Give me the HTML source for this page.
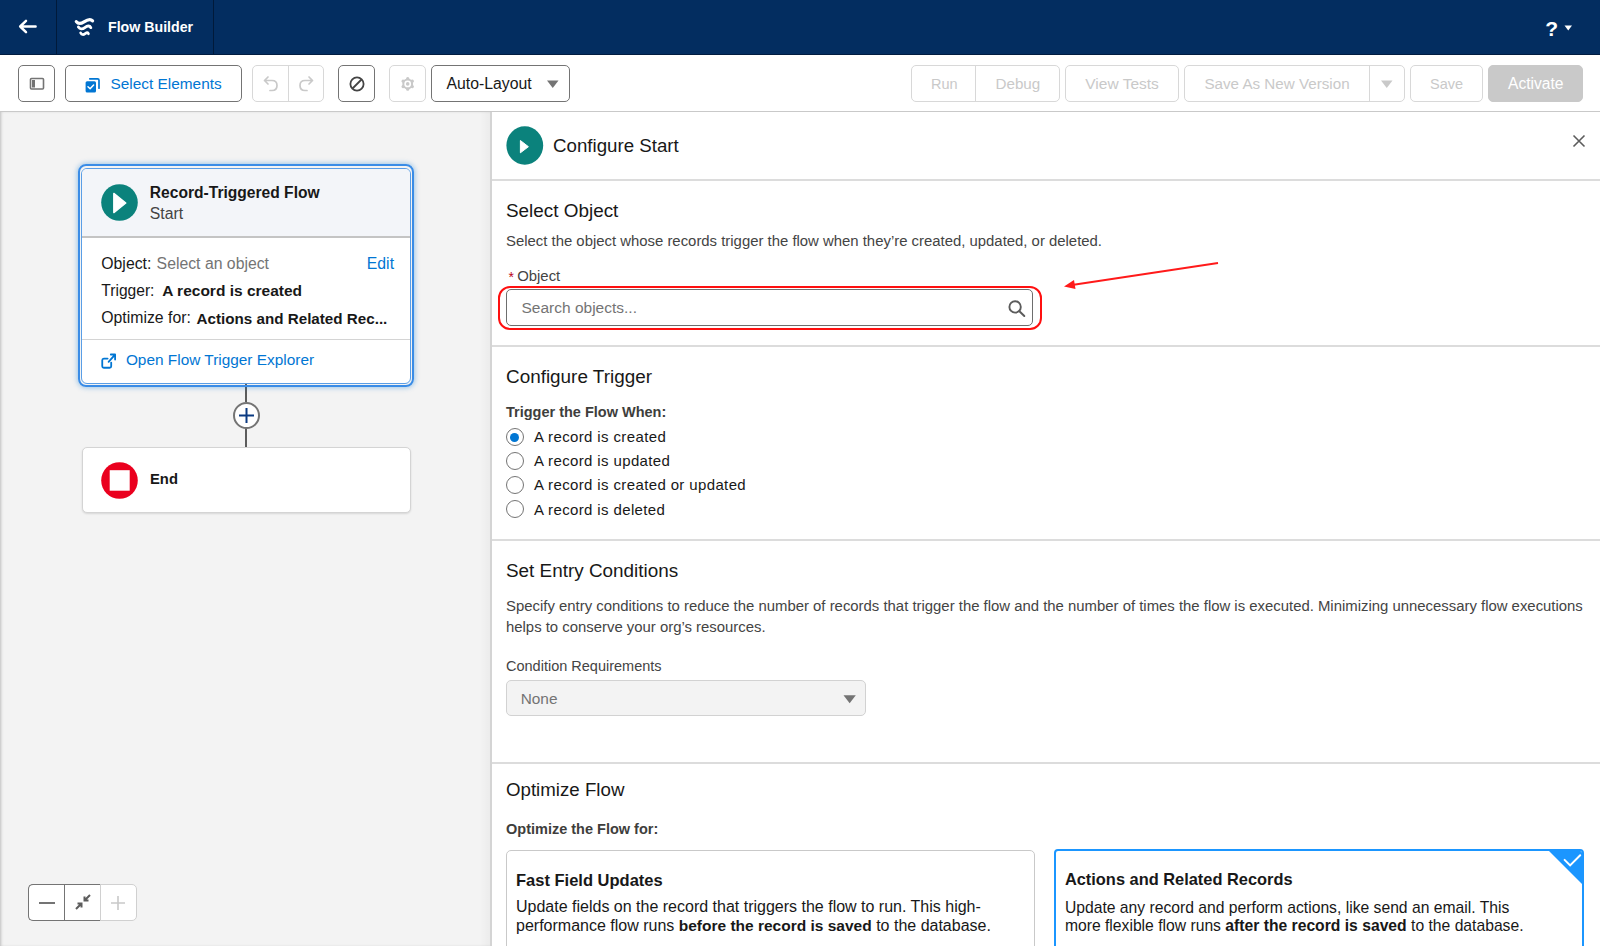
<!DOCTYPE html>
<html><head><meta charset="utf-8">
<style>
*{box-sizing:border-box;margin:0;padding:0}
html,body{width:1600px;height:946px;overflow:hidden;background:#fff;font-family:"Liberation Sans",sans-serif;color:#181818}
.a{position:absolute}
.t{position:absolute;white-space:nowrap;line-height:1;left:calc(var(--x)*1px);top:calc(var(--b)*1px - var(--fs)*0.8465px);font-size:calc(var(--fs)*1px)}
.b{font-weight:bold}
#hdr{left:0;top:0;width:1600px;height:55px;background:#032d60;border-bottom:1px solid #011c40}
.vsep{position:absolute;top:0;width:1px;height:54px;background:#011a3a}
#tb{left:0;top:55px;width:1600px;height:57px;background:#fff;border-bottom:1px solid #c9c9c9}
.btn{position:absolute;top:65px;height:37px;border:1px solid #747474;border-radius:5px;background:#fff}
.dis{border-color:#d8d8d8}
#canvas{left:0;top:112px;width:490px;height:834px;background:#f3f3f3;box-shadow:inset 2px 0 3px -1px rgba(0,0,0,0.22)}
#panel{left:490px;top:112px;width:1110px;height:834px;background:#fff;border-left:2px solid #d4d4d4}
.hsep{position:absolute;left:492px;width:1108px;height:2px;background:#dcdcdc}
.dtext{color:#444}
.grey{color:#747474}
.blue{color:#0176d3}
.radio{position:absolute;left:506px;width:18px;height:18px;border:1.5px solid #747474;border-radius:50%;background:#fff}
</style></head><body>

<!-- HEADER -->
<div id="hdr" class="a"></div>
<div class="vsep" style="left:56px"></div>
<div class="vsep" style="left:213px"></div>
<svg class="a" style="left:18px;top:19px" width="20" height="16" viewBox="0 0 20 16"><path d="M8 1.8 L2.2 7.5 L8 13.2 M2.2 7.5 H17.6" stroke="#fff" stroke-width="2.5" fill="none" stroke-linecap="round" stroke-linejoin="round"/></svg>
<svg class="a" style="left:70px;top:12px" width="30" height="30" viewBox="0 0 30 30"><g stroke="#fff" fill="none" stroke-linecap="round"><path d="M6.3 9.6 C8.3 12.3 11 11.8 14 9.8 S20 6 22.6 8.8" stroke-width="3.2"/><path d="M8.4 15 C10 17.4 12.3 17.5 14.8 15.6 S19.6 13.3 20.8 15.6" stroke-width="2.9"/><path d="M10.6 20.9 C11.8 23 13.3 23 15.2 21.6 S17.9 20.3 18.5 21.8" stroke-width="2.6"/></g></svg>
<div class="t b" style="--x:108;--b:32.5;--fs:14.2;color:#fff">Flow Builder</div>
<div class="t b" style="--x:1545.3;--b:35.9;--fs:21;color:#fff">?</div>
<svg class="a" style="left:1564px;top:25px" width="9" height="7"><path d="M0.5 0.5 H8 L4.25 5.5Z" fill="#fff"/></svg>

<!-- TOOLBAR -->
<div id="tb" class="a"></div>
<div class="btn" style="left:18px;width:37px"></div>
<svg class="a" style="left:29px;top:77px" width="16" height="14" viewBox="0 0 16 14"><rect x="1.5" y="1.5" width="13" height="10.5" rx="1" fill="none" stroke="#747474" stroke-width="1.6"/><rect x="3" y="3" width="3" height="7.5" fill="#747474"/></svg>
<div class="btn" style="left:65px;width:177px"></div>
<svg class="a" style="left:85px;top:77px" width="16" height="16" viewBox="0 0 16 16"><path d="M4.8 1.8 H12.6 C13.4 1.8 14 2.4 14 3.2 V11.2" stroke="#0176d3" stroke-width="1.7" fill="none" stroke-linecap="round"/><rect x="0.6" y="4.2" width="10.4" height="11.2" rx="1.5" fill="#0176d3"/><path d="M3 9.8 L5.1 11.8 L8.6 8" stroke="#fff" stroke-width="1.5" fill="none" stroke-linecap="round" stroke-linejoin="round"/></svg>
<div class="t blue" style="--x:110.5;--b:89;--fs:15.4">Select Elements</div>
<div class="btn dis" style="left:252px;width:72px"></div>
<div class="a" style="left:288px;top:66px;width:1px;height:35px;background:#d8d8d8"></div>
<svg class="a" style="left:262px;top:75px" width="18" height="18" viewBox="0 0 18 18"><path d="M6 2 L2.5 5.5 L6 9 M2.5 5.5 H10 C13 5.5 15 7.5 15 10.5 C15 13.5 13 15.5 10 15.5 H8" stroke="#c9c9c9" stroke-width="1.7" fill="none" stroke-linecap="round" stroke-linejoin="round"/></svg>
<svg class="a" style="left:297px;top:75px" width="18" height="18" viewBox="0 0 18 18"><path d="M12 2 L15.5 5.5 L12 9 M15.5 5.5 H8 C5 5.5 3 7.5 3 10.5 C3 13.5 5 15.5 8 15.5 H10" stroke="#c9c9c9" stroke-width="1.7" fill="none" stroke-linecap="round" stroke-linejoin="round"/></svg>
<div class="btn" style="left:338px;width:37px"></div>
<svg class="a" style="left:348px;top:75px" width="18" height="18" viewBox="0 0 18 18"><circle cx="9" cy="9" r="6.6" stroke="#444" stroke-width="1.8" fill="none"/><path d="M4.5 13.5 L13.5 4.5" stroke="#444" stroke-width="1.8"/></svg>
<div class="btn dis" style="left:389px;width:37px"></div>
<svg class="a" style="left:400px;top:76px" width="16" height="16" viewBox="0 0 16 16"><g fill="#c9c9c9"><circle cx="7.7" cy="7.9" r="5.4"/><rect x="6.1" y="1" width="3.2" height="13.8" rx="1.5"/><rect x="6.1" y="1" width="3.2" height="13.8" rx="1.5" transform="rotate(60 7.7 7.9)"/><rect x="6.1" y="1" width="3.2" height="13.8" rx="1.5" transform="rotate(120 7.7 7.9)"/></g><circle cx="7.7" cy="7.9" r="3.4" fill="#fff"/><circle cx="7.7" cy="7.9" r="1.8" fill="#c9c9c9"/></svg>
<div class="btn" style="left:431px;width:139px"></div>
<div class="t" style="--x:446.5;--b:89;--fs:15.8">Auto-Layout</div>
<svg class="a" style="left:547px;top:80px" width="12" height="9"><path d="M0 0.5 H11.5 L5.75 8Z" fill="#747474"/></svg>

<div class="btn dis" style="left:911px;width:149px"></div>
<div class="a" style="left:975px;top:66px;width:1px;height:35px;background:#d8d8d8"></div>
<div class="t" style="--x:931;--b:89;--fs:14.5;color:#c9c9c9">Run</div>
<div class="t" style="--x:995.5;--b:89;--fs:15.2;color:#c9c9c9">Debug</div>
<div class="btn dis" style="left:1065px;width:114px"></div>
<div class="t" style="--x:1085.3;--b:89;--fs:15.5;color:#c9c9c9">View Tests</div>
<div class="btn dis" style="left:1184px;width:221px"></div>
<div class="a" style="left:1369px;top:66px;width:1px;height:35px;background:#d8d8d8"></div>
<div class="t" style="--x:1204.4;--b:89;--fs:15.2;color:#c9c9c9">Save As New Version</div>
<svg class="a" style="left:1381px;top:80px" width="12" height="9"><path d="M0 0.5 H11.5 L5.75 8Z" fill="#c9c9c9"/></svg>
<div class="btn dis" style="left:1410px;width:73px"></div>
<div class="t" style="--x:1430;--b:89;--fs:14.5;color:#c9c9c9">Save</div>
<div class="btn" style="left:1488px;width:95px;background:#c9c9c9;border-color:#c9c9c9"></div>
<div class="t" style="--x:1508;--b:89;--fs:15.6;color:#fff">Activate</div>

<!-- CANVAS -->
<div id="canvas" class="a"></div>
<!-- start node -->
<div class="a" style="left:245px;top:384px;width:2px;height:18px;background:#5c5c5c"></div>
<div class="a" style="left:245px;top:428px;width:2px;height:19px;background:#5c5c5c"></div>
<div class="a" style="left:232.5px;top:402px;width:27px;height:27px;border:2px solid #747474;border-radius:50%;background:#fff"></div>
<svg class="a" style="left:238px;top:407px" width="17" height="17" viewBox="0 0 17 17"><path d="M8.5 1 V16 M1 8.5 H16" stroke="#0b3a82" stroke-width="2"/></svg>
<div class="a" style="left:77.5px;top:164px;width:336.5px;height:222.5px;border:2px solid #3a8ce6;border-radius:8px;box-shadow:0 0 5px 1px rgba(1,118,211,0.35)"></div>
<div class="a" style="left:81px;top:167.5px;width:330px;height:216px;border:1px solid #5a9ee6;border-radius:6px;background:#fff;overflow:hidden">
  <div class="a" style="left:0;top:0;width:330px;height:69px;background:#f3f5f9;border-bottom:2px solid #c4c4c4"></div>
  <div class="a" style="left:0;top:170px;width:330px;height:1.5px;background:#d4d4d4"></div>
</div>
<svg class="a" style="left:100.5px;top:183.5px" width="37" height="37" viewBox="0 0 37 37"><circle cx="18.5" cy="18.5" r="18.3" fill="#0b827c"/><path d="M12.8 9.4 L24.8 19 L12.8 28.6Z" fill="#fff" stroke="#fff" stroke-width="1.4" stroke-linejoin="round"/></svg>
<div class="t b" style="--x:149.8;--b:198.3;--fs:15.6">Record-Triggered Flow</div>
<div class="t" style="--x:149.8;--b:218.9;--fs:15.8;color:#444">Start</div>
<div class="t" style="--x:101.3;--b:269.5;--fs:15.8">Object:</div>
<div class="t grey" style="--x:156.6;--b:269.5;--fs:15.8">Select an object</div>
<div class="t blue" style="--x:366.8;--b:269.5;--fs:15.8">Edit</div>
<div class="t" style="--x:101.3;--b:296.1;--fs:15.6">Trigger:</div>
<div class="t b" style="--x:162.2;--b:296.1;--fs:15.5">A record is created</div>
<div class="t" style="--x:101.3;--b:323.5;--fs:15.8">Optimize for:</div>
<div class="t b" style="--x:196.6;--b:323.5;--fs:15.2">Actions and Related Rec...</div>
<svg class="a" style="left:100px;top:351px" width="18" height="18" viewBox="0 0 18 18"><g stroke="#0176d3" stroke-width="1.8" fill="none" stroke-linecap="round" stroke-linejoin="round"><path d="M7.6 7.6 H3.8 C2.8 7.6 2.25 8.2 2.25 9.2 V15.2 C2.25 16.2 2.8 16.75 3.8 16.75 H9.6 C10.6 16.75 11.2 16.2 11.2 15.2 V11.6"/><path d="M8.6 10.9 L14.6 4.1 M10.8 3.5 H15.1 V8.6"/></g></svg>
<div class="t blue" style="--x:125.9;--b:365.4;--fs:15.4">Open Flow Trigger Explorer</div>
<!-- end node -->
<div class="a" style="left:81.5px;top:447px;width:329px;height:66px;border:1px solid #d4d4d4;border-radius:5px;background:#fff;box-shadow:0 1px 2px rgba(0,0,0,0.12)"></div>
<svg class="a" style="left:100.5px;top:461.5px" width="37" height="37" viewBox="0 0 37 37"><circle cx="18.5" cy="18.5" r="18.3" fill="#ea001e"/><rect x="8.7" y="8.2" width="20" height="20.5" fill="#fff"/></svg>
<div class="t b" style="--x:150;--b:484.8;--fs:14.8">End</div>
<!-- zoom controls -->
<div class="a" style="left:28px;top:884px;width:108.5px;height:37px;border:1.5px solid #d0d0d0;border-radius:5px;background:#fff"></div>
<div class="a" style="left:28px;top:884px;width:73px;height:37px;border:1.5px solid #747474;border-right:none;border-radius:5px 0 0 5px"></div>
<div class="a" style="left:64px;top:884px;width:1.2px;height:37px;background:#747474"></div>
<div class="a" style="left:100px;top:884px;width:1.2px;height:37px;background:#d0d0d0"></div>
<div class="a" style="left:39px;top:901.7px;width:15.5px;height:2px;background:#747474"></div>
<svg class="a" style="left:74px;top:893px" width="18" height="18" viewBox="0 0 18 18"><g stroke="#5c5c5c" stroke-width="2" fill="none"><path d="M2 16 L7 11 M3.5 10.5 H7.5 V14.5"/><path d="M16 2 L11 7 M10.5 3.5 V7.5 H14.5"/></g></svg>
<svg class="a" style="left:110px;top:895px" width="16" height="16" viewBox="0 0 16 16"><path d="M8 1 V15 M1 8 H15" stroke="#c9c9c9" stroke-width="1.6"/></svg>

<div id="panel" class="a"></div>
<div class="a" style="left:480px;top:112px;width:10px;height:834px;background:linear-gradient(to right,rgba(0,0,0,0),rgba(0,0,0,0.03))"></div>
<svg class="a" style="left:505.5px;top:126px" width="38" height="39" viewBox="0 0 38 39"><ellipse cx="18.8" cy="19.5" rx="18.4" ry="19.2" fill="#0b827c"/><path d="M14.4 14.5 L22.4 20.7 L14.4 26.8Z" fill="#fff" stroke="#fff" stroke-width="1" stroke-linejoin="round"/></svg>
<div class="t" style="--x:553;--b:153.2;--fs:18.7">Configure Start</div>
<svg class="a" style="left:1572px;top:134px" width="14" height="14" viewBox="0 0 14 14"><path d="M1.5 1.5 L12.5 12.5 M12.5 1.5 L1.5 12.5" stroke="#5c5c5c" stroke-width="1.6"/></svg>
<div class="hsep" style="top:179px"></div>

<div class="t" style="--x:506;--b:218.3;--fs:18.9">Select Object</div>
<div class="t dtext" style="--x:506;--b:246.9;--fs:14.9">Select the object whose records trigger the flow when they’re created, updated, or deleted.</div>
<div class="t" style="--x:508.6;--b:281.5;--fs:14;color:#ba0517">*</div>
<div class="t dtext" style="--x:517.2;--b:281.5;--fs:14.9">Object</div>
<div class="a" style="left:497.5px;top:286px;width:544px;height:43.5px;border:2px solid #ff1010;border-radius:12px"></div>
<div class="a" style="left:506px;top:289px;width:527px;height:37px;border:1.3px solid #6e6e6e;border-radius:5px;background:#fff"></div>
<div class="t grey" style="--x:521.5;--b:313.3;--fs:15.5">Search objects...</div>
<svg class="a" style="left:1006px;top:299px" width="21" height="20" viewBox="0 0 21 20"><circle cx="9.1" cy="7.9" r="5.7" stroke="#5c5c5c" stroke-width="1.9" fill="none"/><path d="M13.4 12.3 L18.3 17" stroke="#5c5c5c" stroke-width="2" stroke-linecap="round"/></svg>
<svg class="a" style="left:1060px;top:258px" width="165" height="36" viewBox="0 0 165 36"><path d="M158 5 L12 27" stroke="#ff1a1a" stroke-width="1.8"/><path d="M4 28.5 L14 22 L15.5 31Z" fill="#ff1a1a"/></svg>
<div class="hsep" style="top:344.5px"></div>

<div class="t" style="--x:506;--b:383.9;--fs:18.9">Configure Trigger</div>
<div class="t b" style="--x:506;--b:417.1;--fs:14.5;color:#3e3e3c">Trigger the Flow When:</div>
<div class="radio" style="top:428.2px"></div>
<div class="a" style="left:510.2px;top:432.5px;width:9.3px;height:9.3px;border-radius:50%;background:#0176d3"></div>
<div class="radio" style="top:452.2px"></div>
<div class="radio" style="top:476.3px"></div>
<div class="radio" style="top:500.4px"></div>
<div class="t" style="--x:534;--b:441.9;--fs:15;letter-spacing:0.37px">A record is created</div>
<div class="t" style="--x:534;--b:466;--fs:15;letter-spacing:0.37px">A record is updated</div>
<div class="t" style="--x:534;--b:490.1;--fs:15;letter-spacing:0.37px">A record is created or updated</div>
<div class="t" style="--x:534;--b:515.0;--fs:15;letter-spacing:0.37px">A record is deleted</div>
<div class="hsep" style="top:539px"></div>

<div class="t" style="--x:506;--b:578.4;--fs:18.9">Set Entry Conditions</div>
<div class="t dtext" style="--x:506;--b:611.6;--fs:14.9">Specify entry conditions to reduce the number of records that trigger the flow and the number of times the flow is executed. Minimizing unnecessary flow executions</div>
<div class="t dtext" style="--x:506;--b:632.4;--fs:14.9">helps to conserve your org’s resources.</div>
<div class="t dtext" style="--x:506;--b:671.4;--fs:14.5">Condition Requirements</div>
<div class="a" style="left:506px;top:679.5px;width:360px;height:36.5px;border:1.2px solid #d2d2d2;border-radius:5px;background:#f3f3f3"></div>
<div class="t grey" style="--x:520.7;--b:703.6;--fs:15.4">None</div>
<svg class="a" style="left:842.5px;top:694.5px" width="14" height="10"><path d="M0.5 0.3 H12.8 L6.65 8.2Z" fill="#747474"/></svg>
<div class="hsep" style="top:762px"></div>

<div class="t" style="--x:506;--b:797.1;--fs:18.7">Optimize Flow</div>
<div class="t b" style="--x:506;--b:834.3;--fs:14.5;color:#3e3e3c">Optimize the Flow for:</div>
<div class="a" style="left:506px;top:849.5px;width:529px;height:120px;border:1px solid #c9c9c9;border-radius:5px;background:#fff"></div>
<div class="t b" style="--x:516;--b:885.5;--fs:16.5">Fast Field Updates</div>
<div class="t" style="--x:516;--b:913;--fs:16">Update fields on the record that triggers the flow to run. This high-</div>
<div class="t" style="--x:516;--b:931.1;--fs:16">performance flow runs <b style="font-size:15.5px">before the record is saved</b> to the database.</div>
<div class="a" style="left:1054px;top:849px;width:529.5px;height:120px;border:2px solid #1b96ff;border-radius:4px;background:#fff;overflow:hidden">
  <div class="a" style="right:-1px;top:-1px;width:0;height:0;border-top:35px solid #1b96ff;border-left:35px solid transparent"></div>
</div>
<svg class="a" style="left:1562px;top:853px" width="20" height="16" viewBox="0 0 20 16"><path d="M2.6 6.9 L8.1 12.4 L18.2 2.3" stroke="#fff" stroke-width="2" fill="none" stroke-linecap="round"/></svg>
<div class="t b" style="--x:1064.9;--b:885.3;--fs:16.4">Actions and Related Records</div>
<div class="t" style="--x:1064.9;--b:913.2;--fs:15.7">Update any record and perform actions, like send an email. This</div>
<div class="t" style="--x:1064.9;--b:931;--fs:15.7">more flexible flow runs <b>after the record is saved</b> to the database.</div>
</body></html>
